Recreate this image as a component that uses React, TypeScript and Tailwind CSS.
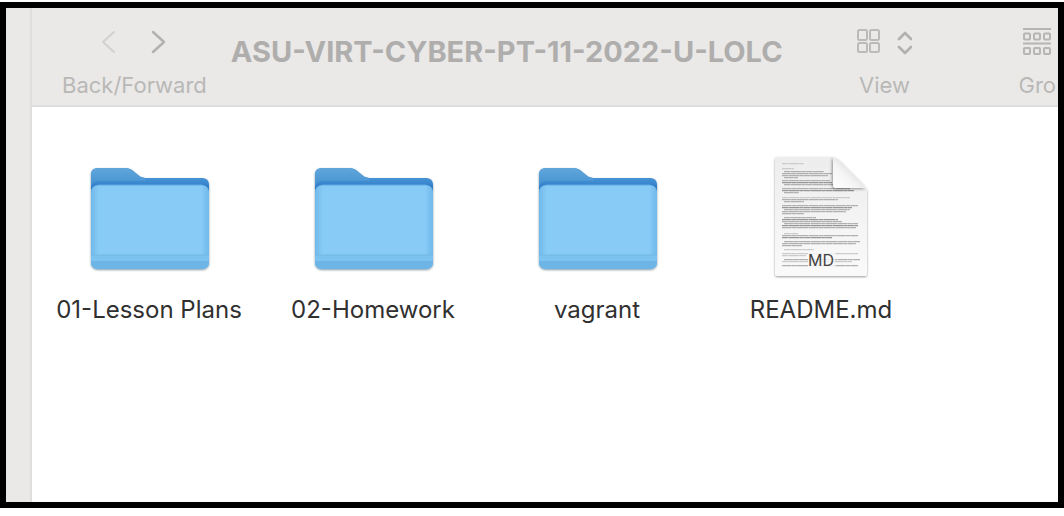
import type { ReactNode } from 'react';

function Folder() {
  return (
    <svg viewBox="-1 -1 124 108" className="h-[108px] w-[124px]" aria-hidden="true">
      <defs>
        <linearGradient id="back" x1="0" y1="0" x2="0" y2="1">
          <stop offset="0" stopColor="#5ba4db" />
          <stop offset="0.13" stopColor="#3f8dd2" />
          <stop offset="0.2" stopColor="#2f7ac4" />
        </linearGradient>
        <linearGradient id="tab" x1="0" y1="0" x2="0" y2="1">
          <stop offset="0" stopColor="#5fa6da" />
          <stop offset="1" stopColor="#438fd0" />
        </linearGradient>
        <linearGradient id="front" x1="0" y1="0" x2="1" y2="0">
          <stop offset="0" stopColor="#6fb9ea" />
          <stop offset="0.07" stopColor="#89cbf7" />
          <stop offset="0.93" stopColor="#89cbf7" />
          <stop offset="1" stopColor="#6fb9ea" />
        </linearGradient>
        <filter id="folderShadow" x="-10%" y="-10%" width="120%" height="125%">
          <feDropShadow dx="0" dy="1" stdDeviation="1" floodColor="#23475f" floodOpacity="0.55" />
        </filter>
      </defs>
      <g filter="url(#folderShadow)">
        <path d="M3 10q0-7 7-7h27q4 0 7 2l6 5q3 3 7 3h57q7 0 7 7v76q0 8-8 8H11q-8 0-8-8z" fill="url(#back)" />
        <path d="M3 10q0-7 7-7h27q4 0 7 2l6 5q3 3 7 3v3H10q-7 0-7 8z" fill="url(#tab)" />
        <path d="M3 28q0-8 8-8h102q8 0 8 8v68q0 8-8 8H11q-8 0-8-8z" fill="url(#front)" />
      </g>
      <path d="M3 90h118v6q0 8-8 8H11q-8 0-8-8z" fill="#7cc2ef" />
      <path d="M3 96h118q0 8-8 8H11q-8 0-8-8z" fill="#6cb5e6" />
      <path d="M3 90h118" stroke="#70b7e5" />
      <path d="M10 20h104" stroke="#5fa9e2" />
    </svg>
  );
}

const textLines = [
  [7, 22, 0], [12, 12, 0], [15, 40, 1], [17, 50, 1], [19, 46, 1], [21, 14, 1],
  [24, 48, 1], [26, 50, 2], [28, 50, 1], [32, 68, 1], [34, 72, 2], [36, 15, 1],
  [41, 68, 0], [43, 56, 1], [45, 20, 1], [49, 76, 1], [51, 70, 2], [53, 66, 1],
  [55, 64, 1], [57, 22, 1], [61, 32, 1], [63, 56, 2], [65, 60, 1], [67, 74, 1],
  [69, 76, 2], [71, 74, 1], [77, 14, 0], [79, 76, 1], [81, 50, 2], [85, 76, 1],
  [87, 74, 1], [89, 20, 1], [93, 30, 0], [97, 76, 0], [99, 24, 0], [103, 76, 1],
  [105, 70, 0], [109, 76, 1],
];
const inks = ['#cbcbcb', '#b0b0b0', '#979797'];

function Document() {
  return (
    <svg viewBox="0 0 100 128" className="h-32 w-[100px]" aria-hidden="true">
      <defs>
        <linearGradient id="paper" x1="0" y1="0" x2="0" y2="1">
          <stop offset="0" stopColor="#ededed" />
          <stop offset="1" stopColor="#fafafa" />
        </linearGradient>
        <linearGradient id="curl" x1="0" y1="1" x2="0.65" y2="0.35">
          <stop offset="0" stopColor="#ffffff" />
          <stop offset="0.6" stopColor="#f5f5f5" />
          <stop offset="1" stopColor="#dedede" />
        </linearGradient>
        <filter id="pageShadow" x="-10%" y="-10%" width="120%" height="120%">
          <feDropShadow dx="0" dy="1" stdDeviation="1.2" floodColor="#000" floodOpacity="0.4" />
        </filter>
        <filter id="curlShadow" x="-40%" y="-30%" width="160%" height="170%">
          <feDropShadow dx="-1" dy="1" stdDeviation="1.8" floodColor="#000" floodOpacity="0.4" />
        </filter>
        <clipPath id="pageClip">
          <path d="M4 5q0-2 2-2h55l35 33v83q0 2-2 2H6q-2 0-2-2z" />
        </clipPath>
      </defs>
      <path d="M4 5q0-2 2-2h55q4 0 8 4l23 23q4 4 4 8v82q0 2-2 2H6q-2 0-2-2z" fill="url(#paper)" filter="url(#pageShadow)" />
      <g clipPath="url(#pageClip)">
        {textLines.map(([y, width, ink], i) => (
          <path
            key={y}
            d={`M${i % 3 === 2 ? 13 : 11} ${y + 2.7}h${width}`}
            stroke={inks[ink]}
            strokeWidth="1.3"
            strokeDasharray={i % 2 ? '9 .3 5 .3 12 .4' : '6 .4 11 .3 4 .3'}
          />
        ))}
        <path d="M62 3v27q0 4 4 4h30z" fill="#fff" filter="url(#curlShadow)" />
      </g>
      <path d="M62 3q4 1 8 5l22 22q3 3 4 6-2-2-5-2H66q-4 0-4-4z" fill="url(#curl)" />
      <rect x="37" y="98" width="27" height="16" fill="#f8f8f8" opacity="0.8" />
      <text x="50" y="112" textAnchor="middle" fontFamily="Inter, sans-serif" fontSize="16" fill="#424242">
        MD
      </text>
    </svg>
  );
}

function ToolItem({ label, children }: { label: string; children: ReactNode }) {
  return (
    <div className="flex shrink-0 flex-col items-center gap-[15px]">
      <div className="flex h-7 items-center">{children}</div>
      <span className="text-[22px] leading-7 text-[#b9b8b7]">{label}</span>
    </div>
  );
}

const files = [
  { name: '01-Lesson Plans', kind: 'folder' },
  { name: '02-Homework', kind: 'folder' },
  { name: 'vagrant', kind: 'folder' },
  { name: 'README.md', kind: 'document' },
];

export default function App() {
  return (
    <div className="flex h-screen flex-col bg-white pt-0.5 pb-2 font-['Inter',sans-serif]">
      <div className="flex min-h-0 flex-1 overflow-hidden border-6 border-black">
        <aside className="w-[26px] shrink-0 border-r-2 border-[#dededc] bg-[#eae9e7]" />
        <div className="flex min-w-0 flex-1 flex-col">
          <header className="flex shrink-0 justify-between overflow-hidden border-b-2 border-[#dededc] bg-[#eae9e7] pt-5 pb-1.5 pl-[30px] pr-0.5">
            <div className="flex gap-6">
              <ToolItem label="Back/Forward">
                <div className="flex gap-[34px]">
                  <button type="button" aria-label="Back" disabled>
                    <svg viewBox="0 0 16 28" className="h-7 w-4" fill="none" stroke="#d2d1d0" strokeWidth="2" strokeLinecap="round" strokeLinejoin="round">
                      <path d="M13 4 2 14l11 10" />
                    </svg>
                  </button>
                  <button type="button" aria-label="Forward">
                    <svg viewBox="0 0 16 28" className="h-7 w-4" fill="none" stroke="#b2b1b0" strokeWidth="2.5" strokeLinecap="round" strokeLinejoin="round">
                      <path d="m2 4 11 10L2 24" />
                    </svg>
                  </button>
                </div>
              </ToolItem>
              <h1 className="pt-1.5 text-[29px] leading-9 font-bold whitespace-nowrap text-[#afaead]">
                ASU-VIRT-CYBER-PT-11-2022-U-LOLC
              </h1>
            </div>
            <div className="flex gap-[106px]">
              <ToolItem label="View">
                <button type="button" aria-label="View options" className="flex items-center gap-3.5">
                  <svg viewBox="0 0 26 28" className="h-7 w-[26px]" fill="none" stroke="#bbbab9" strokeWidth="2">
                    <rect x="2" y="2" width="9" height="10" rx="1.5" />
                    <rect x="14" y="2" width="9" height="10" rx="1.5" />
                    <rect x="2" y="15" width="9" height="9" rx="1.5" />
                    <rect x="14" y="15" width="9" height="9" rx="1.5" />
                  </svg>
                  <svg viewBox="0 0 16 28" className="h-7 w-4" fill="none" stroke="#b2b1b0" strokeWidth="2.7" strokeLinecap="round" strokeLinejoin="round">
                    <path d="m3 11 6-6 6 6M3 19l6 6 6-6" />
                  </svg>
                </button>
              </ToolItem>
              <ToolItem label="Gro">
                <button type="button" aria-label="Group items">
                  <svg viewBox="0 0 28 28" className="size-7" fill="none" stroke="#b6b5b4" strokeWidth="2">
                    <path d="M0 1h28M0 15.5h28" />
                    <rect x="1" y="5.5" width="6" height="6" rx="1" />
                    <rect x="11" y="5.5" width="6" height="6" rx="1" />
                    <rect x="21" y="5.5" width="6" height="6" rx="1" />
                    <rect x="1" y="20" width="6" height="6" rx="1" />
                    <rect x="11" y="20" width="6" height="6" rx="1" />
                    <rect x="21" y="20" width="6" height="6" rx="1" />
                  </svg>
                </button>
              </ToolItem>
            </div>
          </header>
          <main className="flex-1 bg-white pt-[47px] pl-[5px]">
            <ul className="flex flex-wrap">
              {files.map((file) => (
                <li key={file.name} className="flex w-56 flex-col items-center gap-3">
                  <div className="flex h-32 items-center">
                    {file.kind === 'folder' ? <Folder /> : <Document />}
                  </div>
                  <span className="text-2xl leading-8 text-[#303030]">{file.name}</span>
                </li>
              ))}
            </ul>
          </main>
        </div>
      </div>
    </div>
  );
}
